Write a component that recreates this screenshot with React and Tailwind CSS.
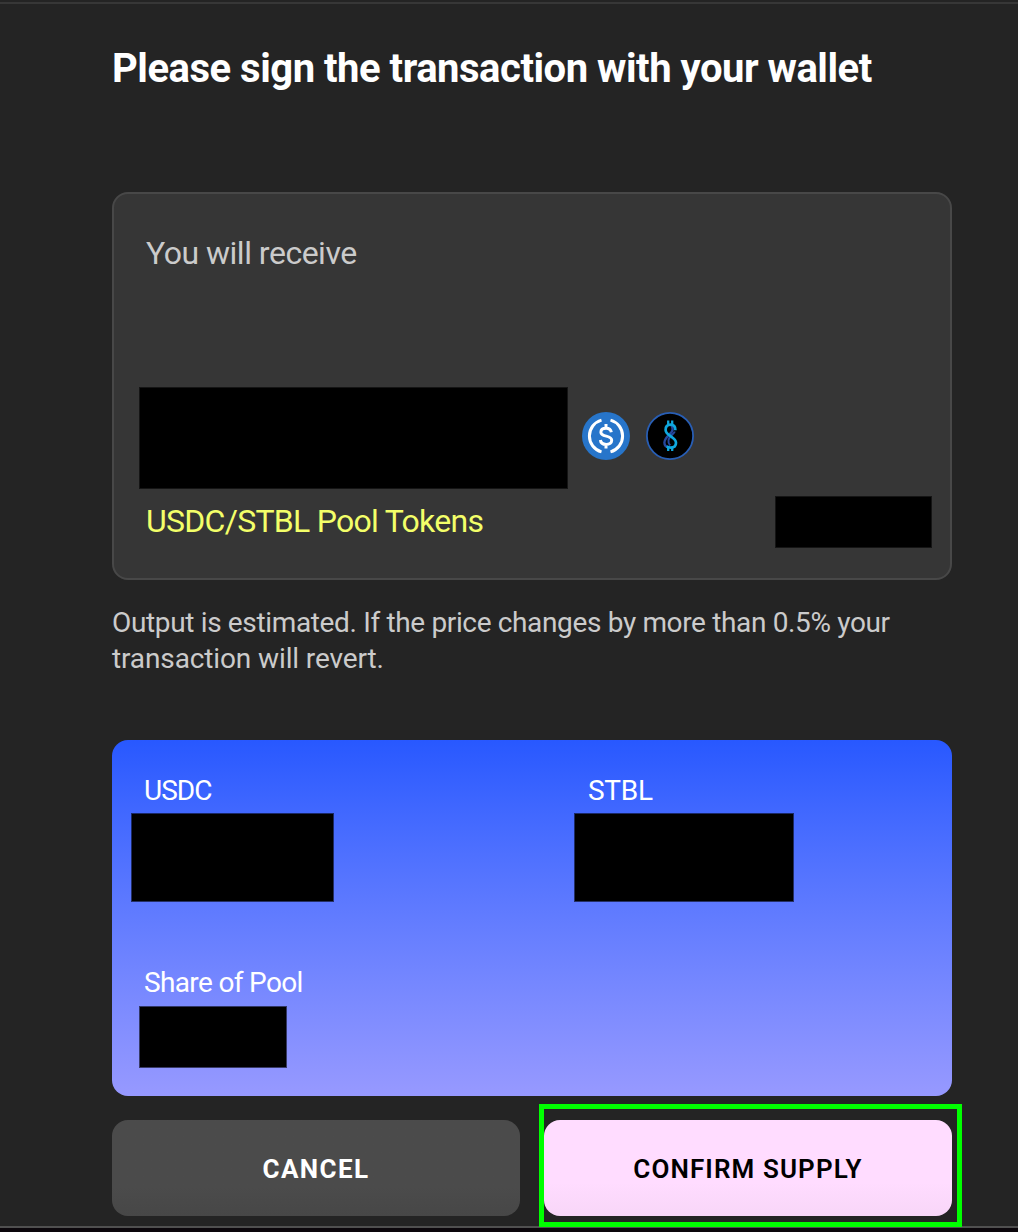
function UsdcIcon() {
  return (
    <svg width="48" height="48" viewBox="0 0 48 48" fill="none" aria-hidden="true">
      <circle cx="24" cy="24" r="24" fill="#2775ca"/>
      <g stroke="#fff" strokeWidth="3">
        <path d="M19.5 8.1A16.5 16.5 0 0 0 19.5 39.9"/>
        <path d="M28.5 8.1A16.5 16.5 0 0 1 28.5 39.9"/>
        <path d="M29.3 20.2c-.4-2.5-2.2-3.900-5.200-3.900-3.200 0-5.200 1.500-5.200 3.900 0 5.400 10.800 2.400 10.800 8 0 2.500-2.200 4.200-5.500 4.200-3.400 0-5.500-1.600-5.800-4.400M24 12v4.200M24 32.300v4.200"/>
      </g>
    </svg>
  )
}

function StblIcon() {
  return (
    <svg width="48" height="48" viewBox="0 0 48 48" fill="none" aria-hidden="true">
      <circle cx="24" cy="24" r="23.1" fill="#000" stroke="#285eb5" strokeWidth="1.8"/>
      <path d="M25.500 13.500c1.800 2.800 1.400 5.600-1.200 8-3.200 3-5.900 5.300-5.900 8.900 0 2.900 1.800 4.600 4.600 5.100" stroke="#25479e" strokeWidth="2.400"/>
      <path d="M28.800 19.500c-.8 2.500-5.500 4.500-6.300 8.500-.4 2.200.3 4 1.700 5.500" stroke="#25479e" strokeWidth="2"/>
      <path d="M29.400 18.200c0-3.500-1.900-5.600-4.900-5.600s-4.900 2.100-4.900 5.300c0 5.800 10.400 7.100 10.400 12.800 0 3-2.100 4.900-5.300 4.900-1.600 0-3-.5-4-1.300" stroke="#0fa8df" strokeWidth="2.700"/>
      <path d="M22.200 8.500v4M26.200 8.500v4M22.200 35.500v3.500M26.200 35.500v3.500" stroke="#0fa8df" strokeWidth="2.300"/>
    </svg>
  )
}

export default function App() {
  return (
    <div className="flex h-[1232px] w-[1018px] flex-col overflow-hidden bg-[#242424] font-['Roboto',sans-serif] text-white">
      <div className="mt-0.5 h-0.5 shrink-0 bg-[#373737]"/>

      <main className="ml-28 flex h-[1222px] w-[840px] shrink-0 flex-col">
        <h1 className="mt-[41px] h-12 whitespace-nowrap text-[40px] leading-[48px] font-bold tracking-[-0.48px]">
          Please sign the transaction with your wallet
        </h1>

        {/* Pool tokens */}
        <section className="mt-[99px] flex h-[388px] shrink-0 flex-col rounded-2xl border-2 border-[#484848] bg-[#363636]">
          <p className="mt-[39px] ml-8 h-10 text-[32px] leading-10 tracking-[-0.5px] text-[#cbcbcb]">You will receive</p>
          <div className="mt-[114px] ml-[25px] flex items-center">
            <div className="h-[102px] w-[429px] border border-black/60 bg-black bg-clip-padding"/>
            <div className="mb-1 ml-3.5 flex gap-4">
              <UsdcIcon/>
              <StblIcon/>
            </div>
          </div>
          <div className="mt-[7px] flex items-start justify-between pr-[18px] pl-8">
            <p className="mt-[5px] text-[32px] leading-10 tracking-[-0.72px] text-[#f3ff69]">USDC/STBL Pool Tokens</p>
            <div className="h-[52px] w-[157px] border border-black/60 bg-black bg-clip-padding"/>
          </div>
        </section>

        <p className="mt-[25px] h-[72px] shrink-0 text-[28px] leading-9 text-[#cbcbcb]">
          <span className="block whitespace-nowrap tracking-[-0.35px]">Output is estimated. If the price changes by more than 0.5% your</span>
          <span className="block whitespace-nowrap tracking-[-0.12px]">transaction will revert.</span>
        </p>

        {/* Deposit summary */}
        <section className="mt-[63px] h-[356px] shrink-0 rounded-2xl bg-linear-to-b from-[#2858ff] to-[#9799ff] pt-[33px] text-[28px] leading-9">
          <div className="flex">
            <div className="w-[443px] pl-[19px]">
              <p className="ml-[13px] tracking-[-1px]">USDC</p>
              <div className="mt-1 h-[89px] w-[203px] border border-black/60 bg-black bg-clip-padding"/>
            </div>
            <div className="pl-[19px]">
              <p className="ml-3.5 tracking-[-0.3px]">STBL</p>
              <div className="mt-1 h-[89px] w-[220px] border border-black/60 bg-black bg-clip-padding"/>
            </div>
          </div>
          <div className="mt-[63px] pl-[27px]">
            <p className="ml-[5px] tracking-[-0.65px]">Share of Pool</p>
            <div className="mt-[5px] h-[62px] w-[148px] border border-black/60 bg-black bg-clip-padding"/>
          </div>
        </section>

        <div className="mt-6 grid h-24 shrink-0 grid-cols-2 gap-6 text-[26px]">
          <button className="rounded-2xl bg-linear-to-b from-[#4b4b4b] from-70% to-[#474747] pt-0.5 font-bold tracking-[1.4px]">CANCEL</button>
          <div className="relative grid">
            <button className="rounded-2xl bg-linear-to-b from-[#ffdcff] from-65% to-[#f8d6f8] pt-0.5 font-semibold tracking-[1.1px] text-black">CONFIRM SUPPLY</button>
            <div className="pointer-events-none absolute -top-4 -right-2.5 -bottom-[11px] -left-[5px] border-5 border-[#00ff00]"/>
          </div>
        </div>
      </main>

      <div className="h-0.5 shrink-0 bg-[#505050]"/>
      <div className="h-1 shrink-0 bg-[#0c070c]"/>
    </div>
  )
}
